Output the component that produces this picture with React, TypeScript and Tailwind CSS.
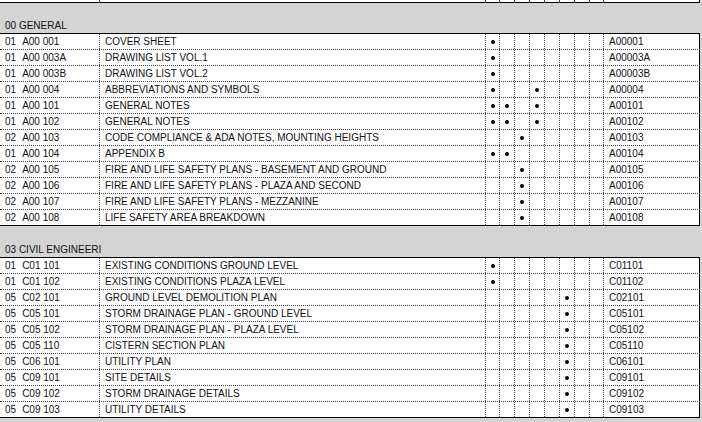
const cols = "grid grid-cols-[100px_386px_14px_15px_15px_15px_15px_15px_15px_14px_96px]";

type Row = { rev: string; code: string; title: string; marks: number[]; id: string };

const sections: { name: string; band: string; rows: Row[] }[] = [
  {
    name: "00 GENERAL",
    band: "h-[31px]",
    rows: [
      { rev: "01", code: "A00 001", title: "COVER SHEET", marks: [1], id: "A00001" },
      { rev: "01", code: "A00 003A", title: "DRAWING LIST VOL.1", marks: [1], id: "A00003A" },
      { rev: "01", code: "A00 003B", title: "DRAWING LIST VOL.2", marks: [1], id: "A00003B" },
      { rev: "01", code: "A00 004", title: "ABBREVIATIONS AND SYMBOLS", marks: [1, 4], id: "A00004" },
      { rev: "01", code: "A00 101", title: "GENERAL NOTES", marks: [1, 2, 4], id: "A00101" },
      { rev: "01", code: "A00 102", title: "GENERAL NOTES", marks: [1, 2, 4], id: "A00102" },
      { rev: "02", code: "A00 103", title: "CODE COMPLIANCE & ADA NOTES, MOUNTING HEIGHTS", marks: [3], id: "A00103" },
      { rev: "01", code: "A00 104", title: "APPENDIX B", marks: [1, 2], id: "A00104" },
      { rev: "02", code: "A00 105", title: "FIRE AND LIFE SAFETY PLANS - BASEMENT AND GROUND", marks: [3], id: "A00105" },
      { rev: "02", code: "A00 106", title: "FIRE AND LIFE SAFETY PLANS - PLAZA AND SECOND", marks: [3], id: "A00106" },
      { rev: "02", code: "A00 107", title: "FIRE AND LIFE SAFETY PLANS - MEZZANINE", marks: [3], id: "A00107" },
      { rev: "02", code: "A00 108", title: "LIFE SAFETY AREA BREAKDOWN", marks: [3], id: "A00108" },
    ],
  },
  {
    name: "03 CIVIL ENGINEERI",
    band: "h-[32px]",
    rows: [
      { rev: "01", code: "C01 101", title: "EXISTING CONDITIONS GROUND LEVEL", marks: [1], id: "C01101" },
      { rev: "01", code: "C01 102", title: "EXISTING CONDITIONS PLAZA LEVEL", marks: [1], id: "C01102" },
      { rev: "05", code: "C02 101", title: "GROUND LEVEL DEMOLITION PLAN", marks: [6], id: "C02101" },
      { rev: "05", code: "C05 101", title: "STORM DRAINAGE PLAN - GROUND LEVEL", marks: [6], id: "C05101" },
      { rev: "05", code: "C05 102", title: "STORM DRAINAGE PLAN - PLAZA LEVEL", marks: [6], id: "C05102" },
      { rev: "05", code: "C05 110", title: "CISTERN SECTION PLAN", marks: [6], id: "C05110" },
      { rev: "05", code: "C06 101", title: "UTILITY PLAN", marks: [6], id: "C06101" },
      { rev: "05", code: "C09 101", title: "SITE DETAILS", marks: [6], id: "C09101" },
      { rev: "05", code: "C09 102", title: "STORM DRAINAGE DETAILS", marks: [6], id: "C09102" },
      { rev: "05", code: "C09 103", title: "UTILITY DETAILS", marks: [6], id: "C09103" },
    ],
  },
];

const markCols = [1, 2, 3, 4, 5, 6, 7, 8];

function SheetRow({ row, last }: { row: Row; last: boolean }) {
  const bottom = last ? "border-b border-solid border-b-black" : "border-b border-dotted border-b-[#444]";
  return (
    <div className={`${cols} h-4 bg-white ${bottom}`}>
      <div className="border-r border-dotted border-r-[#444] pl-[5px] leading-[15px] whitespace-nowrap">
        {row.rev}
        <span className="ml-[6px]">{row.code}</span>
      </div>
      <div className="border-r border-dotted border-r-[#444] pl-[5px] leading-[15px] whitespace-nowrap overflow-hidden">
        {row.title}
      </div>
      {markCols.map((c) => (
        <div key={c} className="border-r border-dotted border-r-[#444] flex items-center justify-center">
          {row.marks.includes(c) && <div className="w-1 h-1 rounded-full bg-black" />}
        </div>
      ))}
      <div className="border-r border-solid border-r-black pl-[5px] leading-[15px]">{row.id}</div>
    </div>
  );
}

export default function App() {
  return (
    <div className="w-[702px] h-[422px] overflow-hidden bg-[#d4d4d4] text-[10px] text-[#111] font-['Liberation_Sans',Arial,sans-serif]">
      <div className="w-[700px]">
        {/* tail of the previous section */}
        <div className={`${cols} h-[3px] bg-white border-b border-solid border-b-black`}>
          {Array.from({ length: 10 }).map((_, i) => (
            <div key={i} className="border-r border-dotted border-r-[#444]" />
          ))}
          <div className="border-r border-solid border-r-black" />
        </div>

        {sections.map((s) => (
          <div key={s.name}>
            <div className={`${s.band} bg-[#d4d4d4] border-b border-solid border-b-black flex items-end`}>
              <div className="pl-[5px] leading-[15px] whitespace-nowrap">{s.name}</div>
            </div>
            {s.rows.map((r, i) => (
              <SheetRow key={r.id} row={r} last={i === s.rows.length - 1} />
            ))}
          </div>
        ))}
      </div>
    </div>
  );
}
